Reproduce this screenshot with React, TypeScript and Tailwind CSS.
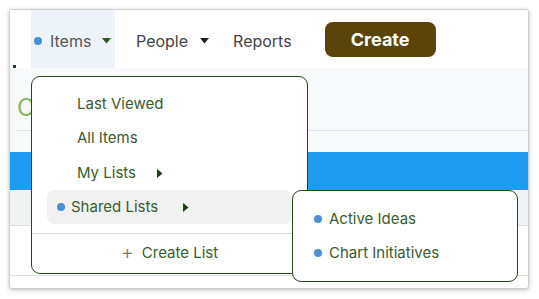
import React from 'react';

const font = { fontFamily: 'Inter, "Noto Sans", sans-serif' };

const Dot = () => <span className="inline-block w-[8px] h-[8px] rounded-full bg-[#4a8fd0] shrink-0" />;

const CaretDown = ({ color }: { color: string }) => (
    <svg width="9" height="6" viewBox="0 0 9 6" className="shrink-0"><path d="M0 0 L9 0 L4.5 5.5 Z" fill={color} /></svg>
);

const CaretRight = () => (
    <svg width="6" height="9" viewBox="0 0 6 9" className="shrink-0"><path d="M0 0 L5.5 4.5 L0 9 Z" fill="#1f3d16" /></svg>
);

const ItemsMenu: React.FC = () => (
    <div className="absolute left-[21px] top-[66px] w-[277px] h-[198px] bg-white border border-[#24481c] rounded-[9px] pt-[10px] text-[15px] text-[#3b5b30]">
        <div className="h-[34px] flex items-center pl-[45px]">Last Viewed</div>
        <div className="h-[35px] flex items-center pl-[45px]">All Items</div>
        <div className="h-[34px] flex items-center pl-[45px]">My Lists<span className="ml-[21px]"><CaretRight /></span></div>
        <div className="mx-[15px] h-[34px] flex items-center rounded-[8px] bg-[#f0f1f0] pl-[10px]">
            <Dot />
            <span className="ml-[6px]">Shared Lists</span>
            <span className="ml-[25px]"><CaretRight /></span>
        </div>
        <div className="mt-[9px] border-t border-[#d6d8d6]" />
        <div className="h-[38px] flex items-center justify-center gap-[8px]">
            <span className="text-[20px] font-light text-[#6b7a68] leading-none -mt-[2px]">+</span>
            <span>Create List</span>
        </div>
    </div>
);

const SubMenu: React.FC = () => (
    <div className="absolute left-[282px] top-[180px] w-[226px] h-[92px] bg-white border border-[#24481c] rounded-[9px] pt-[11px] text-[15px] text-[#3b5b30]">
        <div className="h-[34px] flex items-center pl-[21px] gap-[7px]"><Dot />Active Ideas</div>
        <div className="h-[34px] flex items-center pl-[21px] gap-[7px]"><Dot />Chart Initiatives</div>
    </div>
);

export default function App() {
    return (
        <div className="w-[539px] h-[299px] bg-white p-[9px]" style={font}>
            <div className="relative w-[520px] h-[280px] border border-[#cfcfcf] rounded-[3px] shadow-[0_1px_4px_rgba(0,0,0,0.25)] bg-white overflow-hidden">
                <div className="h-[58px] flex items-stretch bg-white">
                    <div className="w-[21px] relative">
                        <span className="absolute left-[3px] bottom-[0px] w-[3px] h-[3px] bg-[#1f3d16]" />
                    </div>
                    <div className="w-[84px] bg-[#edf3f9] flex items-center pl-[3px] pt-[4px]">
                        <Dot />
                        <span className="ml-[8px] text-[16px] text-[#555]">Items</span>
                        <span className="ml-[11px]"><CaretDown color="#2b5a1c" /></span>
                    </div>
                    <div className="flex items-center pl-[21px] pt-[4px]">
                        <span className="text-[16px] text-[#444]">People</span>
                        <span className="ml-[12px]"><CaretDown color="#222" /></span>
                    </div>
                    <div className="flex items-center pl-[24px] pt-[4px]">
                        <span className="text-[16px] text-[#444]">Reports</span>
                    </div>
                    <div className="flex items-center pl-[33px]">
                        <button className="w-[111px] h-[35px] mt-[1px] rounded-[8px] bg-[#5b4409] text-white text-[18px] font-bold">Create</button>
                    </div>
                </div>
                <div className="h-[84px] bg-[#f8f9fb] pl-[7px] pt-[28px]">
                    <div className="text-[24px] leading-none text-[#8bb46a]">C</div>
                    <div className="mt-[10px] border-t border-[#e0e2e6]" />
                </div>
                <div className="h-[38px] bg-[#1e9cf0]" />
                <div className="h-[36px] bg-[#f1f2f4] border-b border-[#dcdee2]" />
                <div className="h-[50px] bg-white border-b border-[#dcdee2] flex">
                    <div className="ml-[434px] mt-[42px] h-[8px] border-l border-[#cfd1d4]" />
                </div>
                <ItemsMenu />
                <SubMenu />
            </div>
        </div>
    );
}
